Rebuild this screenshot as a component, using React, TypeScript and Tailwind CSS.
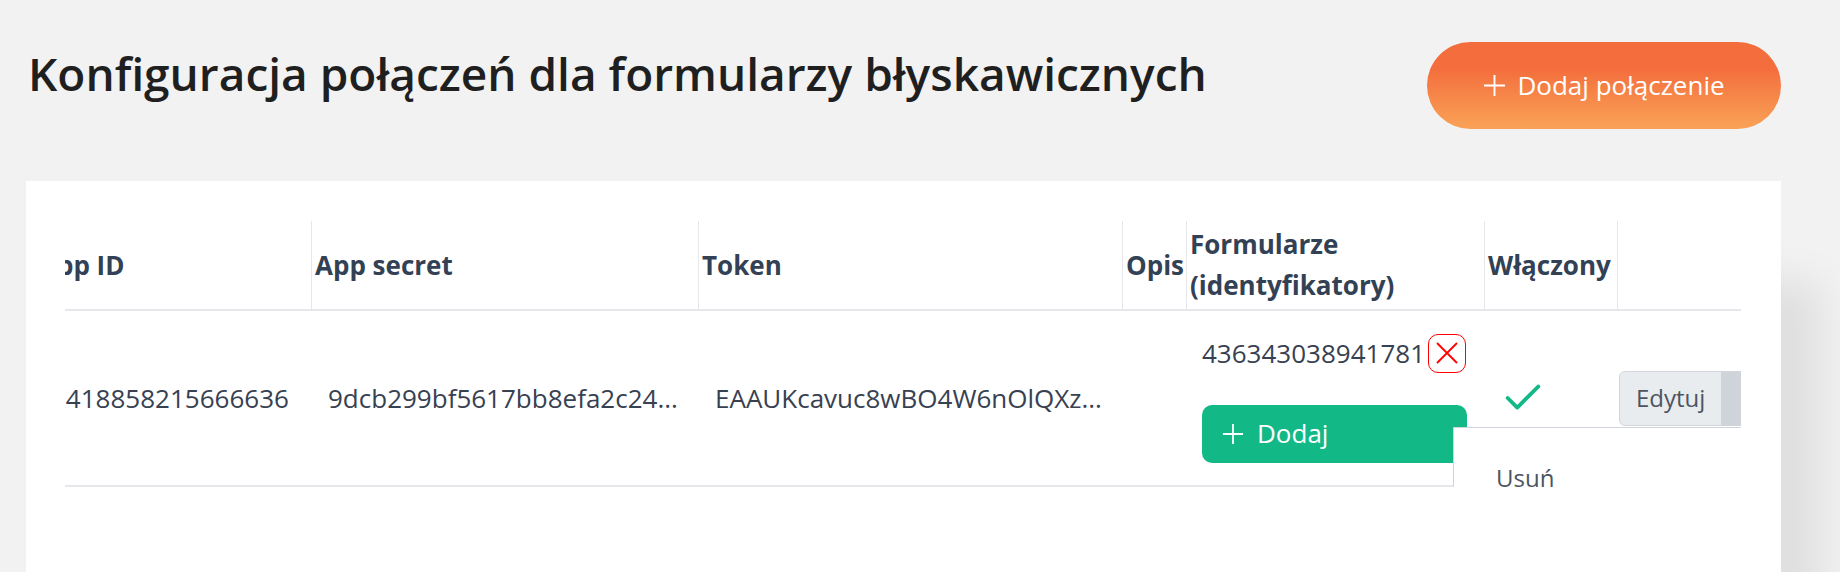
import React from "react";
import { Check } from "lucide-react";

function PlusIcon({ size }: { size: number }) {
  return (
    <svg width={size} height={size} viewBox="0 0 24 24" fill="none" className="shrink-0">
      <path d="M12 1v22M1 12h22" stroke="currentColor" strokeWidth="2" />
    </svg>
  );
}

function XIcon() {
  return (
    <svg width="22" height="22" viewBox="0 0 22 22" fill="none">
      <path d="M1 1l20 20M21 1L1 21" stroke="#ff0000" strokeWidth="1.8" />
    </svg>
  );
}

export default function App() {
  return (
    <div className="h-[572px] overflow-hidden bg-[#f2f2f2] pl-[26px] pr-[59px] font-['Open_Sans',sans-serif]">
      <div className="flex items-start justify-between pt-[42px]">
        <h1 className="mt-[8px] pl-[2px] text-[46px] font-semibold leading-none text-[#1f1f1f]">
          Konfiguracja połączeń dla formularzy błyskawicznych
        </h1>
        <button className="flex h-[87px] w-[354px] items-center justify-center gap-[11px] rounded-full bg-linear-to-b from-[#f36d3d] from-30% to-[#f9a257] text-[26px] text-white">
          <PlusIcon size={23} />
          <span>Dodaj połączenie</span>
        </button>
      </div>

      <div className="mt-[52px] h-[440px] bg-white pl-[39px] pr-[40px] pt-[40px] shadow-[40px_100px_40px_rgba(0,0,0,0.08)]">
        <div className="overflow-hidden">
          <div className="ml-[-31px] w-[1803px]">
            <div className="grid h-[90px] grid-cols-[277px_387px_424px_64px_298px_133px_220px] border-b-2 border-[#e5e7eb] text-[26px] font-bold leading-[41px] text-[#334155]">
              <div className="flex items-center border-l border-[#e5e7eb] pl-[4px]">App ID</div>
              <div className="flex items-center border-l border-[#e5e7eb] pl-[3px]">App secret</div>
              <div className="flex items-center border-l border-[#e5e7eb] pl-[3px]">Token</div>
              <div className="flex items-center border-l border-[#e5e7eb] pl-[3px]">Opis</div>
              <div className="flex items-center border-l border-[#e5e7eb] pl-[3px]">
                Formularze
                <br />
                (identyfikatory)
              </div>
              <div className="flex items-center border-l border-[#e5e7eb] pl-[3px]">Włączony</div>
              <div className="border-l border-[#e5e7eb]"></div>
            </div>

            <div className="grid h-[176px] grid-cols-[277px_387px_424px_64px_298px_133px_220px] border-b-2 border-[#e5e7eb] text-[26px] text-[#374151]">
              <div className="flex items-center pl-[17px]">1418858215666636</div>
              <div className="flex items-center pl-[17px]">9dcb299bf5617bb8efa2c24...</div>
              <div className="flex items-center pl-[17px]">EAAUKcavuc8wBO4W6nOlQXz...</div>
              <div></div>
              <div className="flex flex-col justify-center pl-[16px]">
                <div className="flex items-center">
                  <span>436343038941781</span>
                  <span className="ml-[3px] flex h-[39px] w-[38px] items-center justify-center rounded-[10px] border-[1.5px] border-[#ff0000]">
                    <XIcon />
                  </span>
                </div>
                <button className="mt-[32px] flex h-[58px] w-[265px] items-center gap-[13px] rounded-[10px] bg-[#12b886] pl-[20px] text-[26px] text-white">
                  <PlusIcon size={22} />
                  <span>Dodaj</span>
                </button>
              </div>
              <div className="flex items-center pl-[16px] text-[#12b886]">
                <Check size={46} strokeWidth={2} />
              </div>
              <div className="relative flex items-center pl-[2px]">
                <div className="flex h-[55px] overflow-hidden rounded-l-[6px] border-[1.5px] border-[#d1d5db] bg-[#e9ecef]">
                  <span className="flex items-center px-[16px] text-[24px] text-[#4b5563]">Edytuj</span>
                  <span className="w-[40px] bg-[#ced4da]"></span>
                </div>
                <div className="absolute left-[-164px] top-[116px] z-10 flex h-[102px] w-[330px] items-center rounded-b-[6px] border border-[#d1d5db] bg-white pl-[42px] text-[24px] text-[#4b5563] shadow-[0_2px_0_rgba(0,0,0,0.06)]">
                  Usuń
                </div>
              </div>
            </div>
          </div>
        </div>
      </div>
    </div>
  );
}
